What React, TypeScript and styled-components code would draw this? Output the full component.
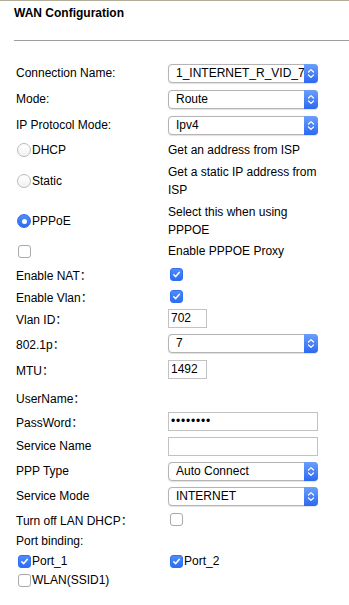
import React from "react";
import styled, { createGlobalStyle } from "styled-components";

const Global = createGlobalStyle`
  html, body { margin: 0; padding: 0; background: #fff; }
  body { font-family: "Liberation Sans", Arial, "Noto Sans CJK SC", sans-serif; font-size: 12px; color: #000; }
  * { box-sizing: border-box; }
`;

const Page = styled.div`
  border-top: 1px solid #b1ad98;
  padding-left: 14px;
  min-height: 605px;
`;

const Title = styled.h1`
  margin: 0;
  padding-top: 5px;
  font-size: 12px;
  line-height: 14px;
  font-weight: bold;
`;

const Divider = styled.hr`
  margin: 20px 0 0 0;
  border: 0;
  height: 1px;
  background: #9e9e9e;
`;

const Form = styled.div`
  margin-top: 20px;
  padding-left: 2px;
  display: flex;
  flex-direction: column;
`;

const Row = styled.div<{ $h: number }>`
  display: grid;
  grid-template-columns: 152px 152px;
  height: ${(p) => p.$h}px;
`;

const Cell = styled.div`
  display: flex;
  align-items: center;
  height: 24px;
  font-size: 12px;
  white-space: nowrap;
`;

const Desc = styled.div`
  white-space: normal;
  line-height: 18px;
  width: 152px;
`;

const SelectWrap = styled.div<{ $w: number }>`
  position: relative;
  width: ${(p) => p.$w}px;
  height: 19px;
`;

const NativeSelect = styled.select`
  appearance: none;
  -webkit-appearance: none;
  width: 100%;
  height: 19px;
  margin: 0;
  border: 1px solid #b4b4b4;
  border-radius: 4px;
  background: #fff;
  box-shadow: 0 0.5px 1px rgba(0, 0, 0, 0.12);
  padding: 0 0 0 7px;
  font-family: "Liberation Sans", Arial, sans-serif;
  font-size: 12px;
  font-weight: normal;
  color: #000;
  outline: none;
`;

const Arrow = styled.span`
  position: absolute;
  top: 0;
  right: 0;
  width: 14px;
  height: 19px;
  border-radius: 0 4px 4px 0;
  background: linear-gradient(#6b9ffb, #2c68f3);
  display: flex;
  align-items: center;
  justify-content: center;
  pointer-events: none;
`;

const TextInput = styled.input<{ $w: number; $dots?: boolean }>`
  width: ${(p) => p.$w}px;
  height: 19px;
  margin: 0;
  border: 1px solid #c2c2c2;
  padding: 0 2px;
  font-family: "Liberation Sans", Arial, sans-serif;
  font-size: 12px;
  letter-spacing: ${(p) => (p.$dots ? "0.8px" : "normal")};
  color: #000;
  background: #fff;
  outline: none;
`;

const Box = styled.span<{ $on: boolean }>`
  display: inline-flex;
  align-items: center;
  justify-content: center;
  width: 13px;
  height: 13px;
  margin-left: 2px;
  border-radius: 3px;
  border: 1px solid ${(p) => (p.$on ? "#2f6ff3" : "#a9a9a9")};
  background: ${(p) => (p.$on ? "linear-gradient(#4f8df8, #2d6cf2)" : "#fff")};
  flex: none;
`;

const Radio = styled.span<{ $on: boolean }>`
  display: inline-flex;
  align-items: center;
  justify-content: center;
  width: 14px;
  height: 14px;
  margin-left: 1px;
  border-radius: 50%;
  border: 1px solid ${(p) => (p.$on ? "#2f6ff3" : "#b9b9b9")};
  background: ${(p) => (p.$on ? "linear-gradient(#4f8df8, #2d6cf2)" : "linear-gradient(#fff, #f2f2f2)")};
  flex: none;
`;

const Dot = styled.span`
  width: 5px;
  height: 5px;
  border-radius: 50%;
  background: #fff;
`;

const Label = styled.span<{ $gap?: number }>`
  margin-left: ${(p) => p.$gap ?? 1}px;
`;

const Chevrons = () => (
  <svg width="8" height="11" viewBox="0 0 8 11" fill="none">
    <path d="M1.5 4 L4 1.6 L6.5 4" stroke="#fff" strokeWidth="1.2" strokeLinecap="round" strokeLinejoin="round" />
    <path d="M1.5 7 L4 9.4 L6.5 7" stroke="#fff" strokeWidth="1.2" strokeLinecap="round" strokeLinejoin="round" />
  </svg>
);

const Select = ({ value }: { value: string }) => (
  <SelectWrap $w={150}>
    <NativeSelect value={value} onChange={() => {}}>
      <option value={value}>{value}</option>
    </NativeSelect>
    <Arrow>
      <Chevrons />
    </Arrow>
  </SelectWrap>
);

const Check = ({ on }: { on: boolean }) => (
  <Box $on={on}>
    {on && (
      <svg width="9" height="9" viewBox="0 0 9 9" fill="none">
        <path d="M1.8 4.7 L3.7 6.6 L7.2 2.4" stroke="#fff" strokeWidth="1.5" strokeLinecap="round" strokeLinejoin="round" />
      </svg>
    )}
  </Box>
);

const RadioBtn = ({ on }: { on: boolean }) => <Radio $on={on}>{on && <Dot />}</Radio>;

export default function App() {
  return (
    <>
      <Global />
      <Page>
        <Title>WAN Configuration</Title>
        <Divider />
        <Form>
          <Row $h={26}>
            <Cell>Connection Name:</Cell>
            <Cell><Select value="1_INTERNET_R_VID_702" /></Cell>
          </Row>
          <Row $h={26}>
            <Cell>Mode:</Cell>
            <Cell><Select value="Route" /></Cell>
          </Row>
          <Row $h={25}>
            <Cell>IP Protocol Mode:</Cell>
            <Cell><Select value="Ipv4" /></Cell>
          </Row>
          <Row $h={31}>
            <Cell><RadioBtn on={false} /><Label>DHCP</Label></Cell>
            <Cell><Desc>Get an address from ISP</Desc></Cell>
          </Row>
          <Row $h={40}>
            <Cell><RadioBtn on={false} /><Label>Static</Label></Cell>
            <Cell><Desc>Get a static IP address from ISP</Desc></Cell>
          </Row>
          <Row $h={30}>
            <Cell><RadioBtn on={true} /><Label>PPPoE</Label></Cell>
            <Cell><Desc>Select this when using PPPOE</Desc></Cell>
          </Row>
          <Row $h={23}>
            <Cell><Check on={false} /></Cell>
            <Cell>Enable PPPOE Proxy</Cell>
          </Row>
          <Row $h={22}>
            <Cell>Enable NAT：</Cell>
            <Cell><Check on={true} /></Cell>
          </Row>
          <Row $h={22}>
            <Cell>Enable Vlan：</Cell>
            <Cell><Check on={true} /></Cell>
          </Row>
          <Row $h={25}>
            <Cell>Vlan ID：</Cell>
            <Cell><TextInput $w={39} defaultValue="702" /></Cell>
          </Row>
          <Row $h={26}>
            <Cell>802.1p：</Cell>
            <Cell><Select value="7" /></Cell>
          </Row>
          <Row $h={28}>
            <Cell>MTU：</Cell>
            <Cell><TextInput $w={39} defaultValue="1492" /></Cell>
          </Row>
          <Row $h={24}>
            <Cell>UserName：</Cell>
            <Cell />
          </Row>
          <Row $h={25}>
            <Cell>PassWord：</Cell>
            <Cell><TextInput $w={150} $dots type="password" defaultValue="12345678" /></Cell>
          </Row>
          <Row $h={25}>
            <Cell>Service Name</Cell>
            <Cell><TextInput $w={150} defaultValue="" /></Cell>
          </Row>
          <Row $h={25}>
            <Cell>PPP Type</Cell>
            <Cell><Select value="Auto Connect" /></Cell>
          </Row>
          <Row $h={23}>
            <Cell>Service Mode</Cell>
            <Cell><Select value="INTERNET" /></Cell>
          </Row>
          <Row $h={22}>
            <Cell>Turn off LAN DHCP：</Cell>
            <Cell><Check on={false} /></Cell>
          </Row>
          <Row $h={20}>
            <Cell>Port binding:</Cell>
            <Cell />
          </Row>
          <Row $h={19}>
            <Cell><Check on={true} /><Label $gap={1}>Port_1</Label></Cell>
            <Cell><Check on={true} /><Label $gap={1}>Port_2</Label></Cell>
          </Row>
          <Row $h={24}>
            <Cell><Check on={false} /><Label $gap={1}>WLAN(SSID1)</Label></Cell>
            <Cell />
          </Row>
        </Form>
      </Page>
    </>
  );
}
